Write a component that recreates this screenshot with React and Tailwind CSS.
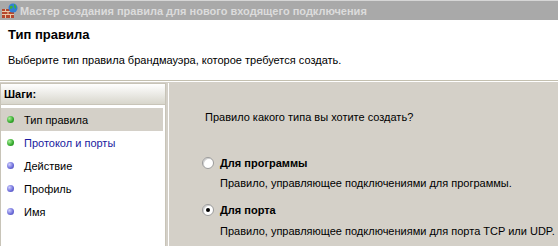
const steps = [
  { label: 'Тип правила', done: true, active: true },
  { label: 'Протокол и порты', done: true, link: true },
  { label: 'Действие' },
  { label: 'Профиль' },
  { label: 'Имя' },
]

function FirewallIcon() {
  return (
    <svg width="16" height="16" viewBox="0 0 16 16">
      <rect x="0" y="6" width="12" height="9" fill="#b5472e" />
      <g stroke="#e8c9a8" strokeWidth="1">
        <line x1="0" y1="8.5" x2="12" y2="8.5" />
        <line x1="0" y1="11.5" x2="12" y2="11.5" />
        <line x1="3.5" y1="6" x2="3.5" y2="8.5" />
        <line x1="8.5" y1="6" x2="8.5" y2="8.5" />
        <line x1="6" y1="8.5" x2="6" y2="11.5" />
        <line x1="3.5" y1="11.5" x2="3.5" y2="15" />
        <line x1="8.5" y1="11.5" x2="8.5" y2="15" />
      </g>
      <circle cx="11" cy="5" r="4.5" fill="#2f7fd6" />
      <path d="M8 3 Q10 2 11 4 Q10 6 8 6 Z M12 1 Q15 3 14 6 Q12 5 12 3 Z" fill="#3fae3a" />
    </svg>
  )
}

function Dot({ green }) {
  return (
    <span
      className={
        'w-[7px] h-[7px] rounded-full shrink-0 ' +
        (green
          ? 'bg-[radial-gradient(circle_at_35%_35%,#a8f09a,#32a82a_60%,#1f7a1a)]'
          : 'bg-[radial-gradient(circle_at_35%_35%,#d0d0ff,#6a6ad8_60%,#4040a8)]')
      }
    />
  )
}

function Radio({ checked }) {
  return (
    <span className="w-[12px] h-[12px] rounded-full border border-[#9a9a9a] bg-white shadow-[inset_1px_1px_0_#d0d0d0] flex items-center justify-center shrink-0">
      {checked && <span className="w-[4px] h-[4px] rounded-full bg-black" />}
    </span>
  )
}

export default function App() {
  return (
    <div className="w-[558px] h-[246px] overflow-hidden bg-[#d4d0c8] flex flex-col text-[11px] leading-[14px] text-black font-['Liberation_Sans',Arial,sans-serif]">
      <div className="h-[20px] shrink-0 bg-[#a9a9a9] border-t border-[#d6d6d6] flex items-center pl-[2px] gap-[2px]">
        <FirewallIcon />
        <span className="font-bold text-[11px] text-[#dcdcdc]">
          Мастер создания правила для нового входящего подключения
        </span>
      </div>

      <div className="h-[60px] shrink-0 bg-white flex flex-col pl-[8px]">
        <div className="mt-[7px] font-bold text-[13px] leading-[16px]">Тип правила</div>
        <div className="mt-[10px]">Выберите тип правила брандмауэра, которое требуется создать.</div>
      </div>
      <div className="h-[2px] shrink-0 border-t border-[#c4c0b0] border-b border-b-white" />

      <div className="flex flex-1 min-h-0 pt-[1px]">
        <div className="w-[166px] shrink-0 bg-white border border-[#c8c4b8] border-b-0 flex flex-col">
          <div className="h-[21px] bg-[linear-gradient(#ffffff,#d8d6cc)] border-b border-[#c8c4b8] flex items-center pl-[3px] font-bold text-[11px]">
            Шаги:
          </div>
          <div className="flex flex-col pt-[3px] pr-[2px]">
            {steps.map(s => (
              <div
                key={s.label}
                className={
                  'h-[23px] flex items-center gap-[10px] pl-[6px] ' +
                  (s.active ? 'bg-[#d4d0c8]' : '') +
                  (s.link ? ' text-[#1a1aa0]' : '')
                }
              >
                <Dot green={s.done} />
                <span>{s.label}</span>
              </div>
            ))}
          </div>
        </div>

        <div className="flex-1 ml-[2px] border-l border-white flex flex-col pl-[36px]">
          <div className="mt-[27px]">Правило какого типа вы хотите создать?</div>

          <div className="mt-[32px] flex items-center gap-[6px] -ml-[3px]">
            <Radio />
            <span className="font-bold">Для программы</span>
          </div>
          <div className="mt-[6px] ml-[15px]">Правило, управляющее подключениями для программы.</div>

          <div className="mt-[13px] flex items-center gap-[6px] -ml-[3px]">
            <Radio checked />
            <span className="font-bold">Для порта</span>
          </div>
          <div className="mt-[7px] ml-[15px]">Правило, управляющее подключениями для порта TCP или UDP.</div>
        </div>
      </div>
    </div>
  )
}
